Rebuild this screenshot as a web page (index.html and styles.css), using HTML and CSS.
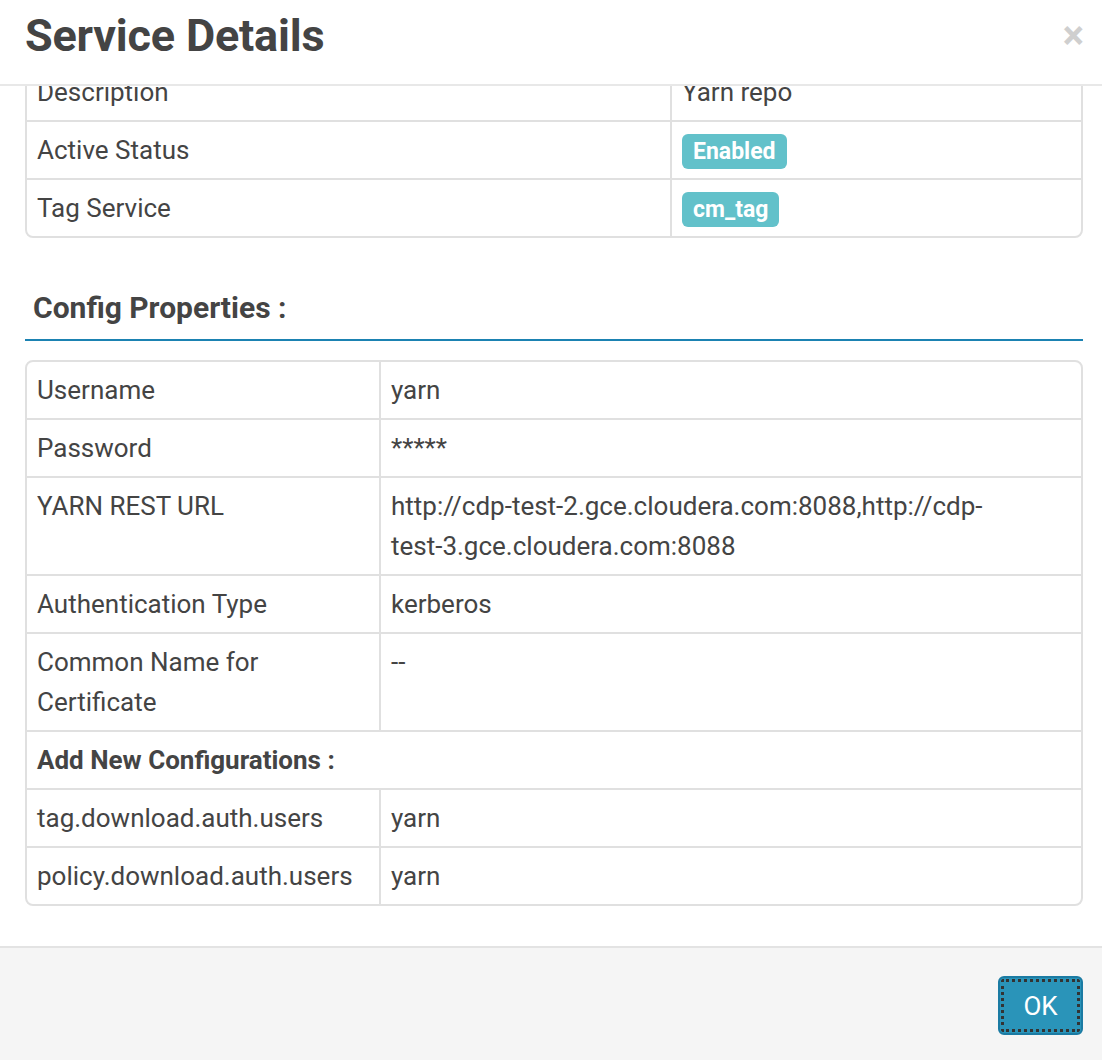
FILE: index.html
```html
<!DOCTYPE html>
<html>
<head>
<meta charset="utf-8">
<link rel="stylesheet" href="styles.css">
</head>
<body>
<div class="modal">
  <div class="modal-header">
    <h3 class="title">Service Details</h3>
    <span class="close">&times;</span>
  </div>
  <div class="modal-body">
    <div class="scroll-content">
      <div class="tbl-wrap">
        <table class="tbl tbl-service">
          <colgroup><col class="c1"><col></colgroup>
          <tr><td>Description</td><td>Yarn repo</td></tr>
          <tr><td>Active Status</td><td><span class="label">Enabled</span></td></tr>
          <tr><td>Tag Service</td><td><span class="label">cm_tag</span></td></tr>
        </table>
      </div>
      <h4 class="section-title">Config Properties :</h4>
      <div class="tbl-wrap tbl-wrap-config">
        <table class="tbl tbl-config">
          <colgroup><col class="c1"><col></colgroup>
          <tr><td>Username</td><td>yarn</td></tr>
          <tr><td>Password</td><td>*****</td></tr>
          <tr><td>YARN REST URL</td><td class="url">http://cdp-test-2.gce.cloudera.com:8088,http://cdp-test-3.gce.cloudera.com:8088</td></tr>
          <tr><td>Authentication Type</td><td>kerberos</td></tr>
          <tr><td>Common Name for Certificate</td><td>--</td></tr>
          <tr><td colspan="2" class="bold">Add New Configurations :</td></tr>
          <tr><td>tag.download.auth.users</td><td>yarn</td></tr>
          <tr><td>policy.download.auth.users</td><td>yarn</td></tr>
        </table>
      </div>
    </div>
  </div>
  <div class="modal-footer">
    <button class="btn-ok">OK</button>
  </div>
</div>
</body>
</html>
```

FILE: styles.css
```css
* { box-sizing: border-box; }
html, body {
  margin: 0;
  padding: 0;
  background: #fff;
}
body {
  font-family: Roboto, "Liberation Sans", Arial, sans-serif;
  color: #444;
  font-size: 26px;
  line-height: 40px;
}
.modal {
  width: 1102px;
  height: 1060px;
  display: flex;
  flex-direction: column;
  overflow: hidden;
}
.modal-header {
  height: 86px;
  flex: 0 0 86px;
  border-bottom: 2px solid #e8e8e8;
  display: flex;
  align-items: center;
  justify-content: space-between;
  padding: 0 18px 12px 25px;
}
.title {
  margin: 0;
  font-size: 45px;
  line-height: 52px;
  font-weight: 700;
  color: #444;
  letter-spacing: -0.2px;
}
.close {
  font-size: 40px;
  font-weight: 700;
  color: #cfcfcf;
  line-height: 40px;
}
.modal-body {
  flex: 1 1 auto;
  overflow: hidden;
  padding: 0 19px 0 25px;
}
.scroll-content {
  margin-top: -24px;
}
.tbl-wrap {
  border: 2px solid #e0e0e0;
  border-radius: 8px;
  overflow: hidden;
}
.tbl {
  width: 100%;
  border-collapse: separate;
  border-spacing: 0;
  table-layout: fixed;
}
.tbl td {
  padding: 8px 10px;
  vertical-align: top;
  border-top: 2px solid #e0e0e0;
  word-wrap: break-word;
}
.tbl tr:first-child td { border-top: none; }
.tbl td + td { border-left: 2px solid #e0e0e0; }
.tbl td.url { padding-right: 60px; }
.tbl-service .c1 { width: 643px; }
.tbl-config .c1 { width: 352px; }
.bold { font-weight: 700; }
.label {
  display: inline-block;
  background: #62c1ca;
  color: #fff;
  font-weight: 700;
  font-size: 23px;
  line-height: 27px;
  padding: 4px 11px;
  border-radius: 6px;
  vertical-align: middle;
  position: relative;
  top: -1px;
}
.section-title {
  margin: 52px 0 0 0;
  padding: 0 0 13px 8px;
  font-size: 30px;
  line-height: 36px;
  font-weight: 700;
  color: #444;
  border-bottom: 2px solid #1b82b2;
}
.tbl-wrap-config { margin-top: 19px; }
.modal-footer {
  flex: 0 0 114px;
  height: 114px;
  background: #f5f5f5;
  border-top: 2px solid #e3e3e3;
  display: flex;
  justify-content: flex-end;
  align-items: flex-start;
  padding: 28px 19px 0 0;
}
.btn-ok {
  width: 85px;
  height: 59px;
  background: #2a94b9;
  border: 2px solid #1b7ba3;
  border-radius: 6px;
  color: #fff;
  font-family: Roboto, "Liberation Sans", Arial, sans-serif;
  font-size: 26px;
  outline: 3px dotted #333;
  outline-offset: -6px;
  padding: 0;
}
```
